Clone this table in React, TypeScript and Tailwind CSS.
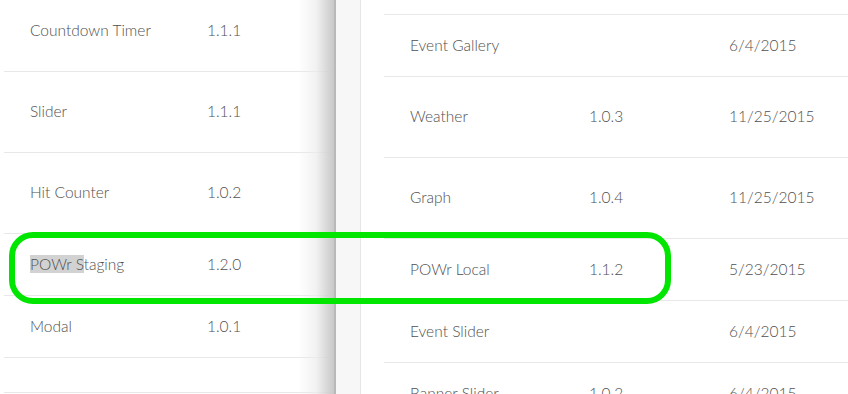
import React from 'react'

type Row = { name: string; version?: string; date?: string; h: string; highlight?: boolean }

const leftRows: Row[] = [
  { name: 'Countdown Timer', version: '1.1.1', h: 'h-[81px]' },
  { name: 'Slider', version: '1.1.1', h: 'h-[81px]' },
  { name: 'Hit Counter', version: '1.0.2', h: 'h-[81px]' },
  { name: 'POWr Staging', version: '1.2.0', h: 'h-[62px]', highlight: true },
  { name: 'Modal', version: '1.0.1', h: 'h-[62px]' },
  { name: '', h: 'h-[35px]' },
]

const rightRows: Row[] = [
  { name: 'Event Gallery', version: '', date: '6/4/2015', h: 'h-[62px]' },
  { name: 'Weather', version: '1.0.3', date: '11/25/2015', h: 'h-[81px]' },
  { name: 'Graph', version: '1.0.4', date: '11/25/2015', h: 'h-[81px]' },
  { name: 'POWr Local', version: '1.1.2', date: '5/23/2015', h: 'h-[62px]' },
  { name: 'Event Slider', version: '', date: '6/4/2015', h: 'h-[62px]' },
  { name: 'Banner Slider', version: '1.0.2', date: '6/4/2015', h: 'h-[62px]' },
]

export default function App() {
  return (
    <div
      className="relative flex h-[394px] w-[848px] overflow-hidden bg-white text-[15.5px] font-light text-[#505050]"
      style={{ fontFamily: 'Lato, "Open Sans", sans-serif' }}
    >
      {/* Left table (behind) */}
      <div className="relative w-[334px] shrink-0">
        <div className="-mt-[9px] ml-[4px] flex flex-col">
          {leftRows.map((r, i) => (
            <div key={i} className={`flex items-center border-b border-[#e8e8e8] pl-[26px] ${r.h}`}>
              <div className="w-[177px]">
                {r.highlight ? (
                  <>
                    <span className="bg-[#d2d2d2]">POWr S</span>taging
                  </>
                ) : (
                  r.name
                )}
              </div>
              <div>{r.version}</div>
            </div>
          ))}
        </div>
        <div className="absolute inset-y-0 right-0 w-[36px] bg-gradient-to-r from-white/0 via-[#ececec]/70 to-[#c8c8c8]" />
      </div>

      {/* Right panel edge */}
      <div className="w-[2px] shrink-0 bg-[#b9b9b9]" />
      <div className="w-[25px] shrink-0 border-r border-[#e6e6e6] bg-[#f7f7f7]" />

      {/* Right table */}
      <div className="flex-1 pl-[23px]">
        <div className="h-[15px] border-b border-[#e8e8e8]" />
        {rightRows.map((r, i) => (
          <div key={i} className={`flex items-center border-b border-[#e8e8e8] pl-[26px] ${r.h}`}>
            <div className="w-[179px]">{r.name}</div>
            <div className="w-[140px]">{r.version}</div>
            <div>{r.date}</div>
          </div>
        ))}
      </div>

      {/* Annotation */}
      <div className="absolute left-[9px] top-[232px] h-[72px] w-[662px] rounded-[24px] border-[6px] border-[#00e600]" />
    </div>
  )
}
